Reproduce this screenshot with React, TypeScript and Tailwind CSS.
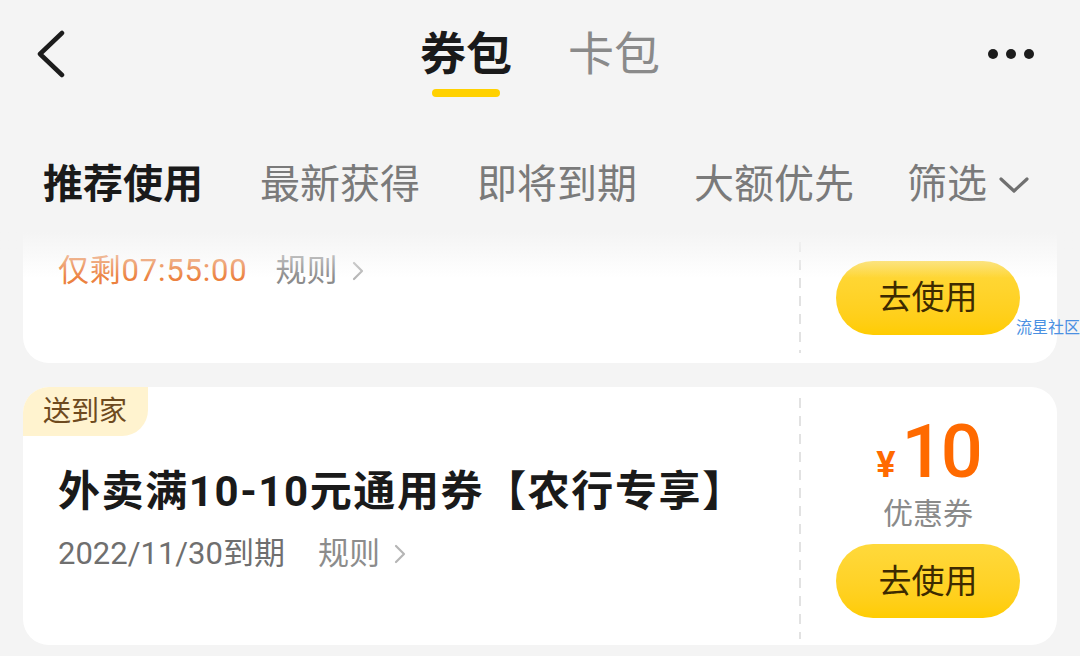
const cjk = { fontFamily: 'Roboto, "Noto Sans CJK SC", "Noto Sans", sans-serif' };

function Chevron({ className }: { className?: string }) {
  return (
    <svg width="12" height="20" viewBox="0 0 12 20" className={className}>
      <polyline points="2,2 10,10 2,18" fill="none" stroke="#b5b5b5" strokeWidth="2.2" strokeLinecap="round" strokeLinejoin="round" />
    </svg>
  );
}

function Dashes() {
  return (
    <div className="w-[2px] self-stretch bg-[repeating-linear-gradient(to_bottom,#e2e2e2_0_10px,transparent_10px_18px)]" />
  );
}

function UseButton() {
  return (
    <button className="flex h-[74px] w-[184px] items-center justify-center rounded-full bg-gradient-to-b from-[#ffd93b] to-[#ffcc00] text-[33px] leading-none text-[#3d2a00]">
      去使用
    </button>
  );
}

export default function App() {
  return (
    <div className="relative h-[656px] w-[1080px] overflow-hidden bg-[#f4f4f4]" style={cjk}>
      {/* header */}
      <div className="grid grid-cols-[1fr_auto_1fr] items-start px-[36px] pt-[31px]">
        <div className="flex h-[46px] items-center">
          <svg width="30" height="48" viewBox="0 0 30 48">
            <polyline points="26,3 4,24 26,45" fill="none" stroke="#1c1c1c" strokeWidth="4.5" strokeLinecap="round" strokeLinejoin="round" />
          </svg>
        </div>
        <div className="flex gap-[56px]">
          <div className="flex flex-col items-center">
            <span className="text-[46px] font-bold leading-[46px] text-[#1a1a1a]">券包</span>
            <span className="mt-[12px] h-[8px] w-[68px] rounded-full bg-[#ffd100]" />
          </div>
          <span className="text-[46px] leading-[46px] text-[#8a8a8a]">卡包</span>
        </div>
        <div className="flex h-[46px] items-center justify-end gap-[8px] pr-[10px]">
          <span className="h-[10px] w-[10px] rounded-full bg-[#1c1c1c]" />
          <span className="h-[10px] w-[10px] rounded-full bg-[#1c1c1c]" />
          <span className="h-[10px] w-[10px] rounded-full bg-[#1c1c1c]" />
        </div>
      </div>

      {/* sort tabs */}
      <div className="mt-[68px] flex items-center gap-[57px] pl-[43px] text-[40px] leading-[40px] text-[#7a7a7a]">
        <span className="font-bold text-[#1a1a1a]">推荐使用</span>
        <span>最新获得</span>
        <span>即将到期</span>
        <span>大额优先</span>
        <span className="-ml-[4px] flex items-center gap-[12px]">
          筛选
          <svg width="30" height="18" viewBox="0 0 30 18">
            <polyline points="2,3 15,15 28,3" fill="none" stroke="#707070" strokeWidth="3.2" strokeLinecap="round" strokeLinejoin="round" />
          </svg>
        </span>
      </div>

      {/* coupon list */}
      <div className="relative mt-[27px] flex flex-col gap-[24px] px-[23px]">
        <div className="flex h-[131px] rounded-b-[26px] bg-white">
          <div className="flex flex-1 items-start gap-[28px] pl-[35px] pt-[23px] text-[31px] leading-[31px]">
            <span className="tracking-[0.8px] text-[#ec8240]">仅剩07:55:00</span>
            <span className="flex items-center gap-[14px] text-[#8c8c8c]">
              规则
              <Chevron />
            </span>
          </div>
          <div className="flex w-[258px] py-[10px]">
            <Dashes />
            <div className="flex flex-1 items-center justify-center pr-[2px]">
              <UseButton />
            </div>
          </div>
        </div>

        <div className="flex h-[258px] rounded-[26px] bg-white">
          <div className="flex flex-1 flex-col items-start">
            <span className="flex h-[49px] items-center rounded-br-[26px] rounded-tl-[26px] bg-[#fff3cf] pl-[20px] pr-[21px] text-[28px] text-[#6e4a1e]">
              送到家
            </span>
            <span className="mt-[35px] pl-[35px] text-[42px] font-bold leading-[42px] tracking-[1.6px] text-[#1a1a1a]">
              外卖满10-10元通用券【农行专享】
            </span>
            <div className="mt-[25px] flex items-center gap-[33px] pl-[35px] text-[31px] leading-[31px]">
              <span className="text-[#6f6f6f]">2022/11/30到期</span>
              <span className="flex items-center gap-[14px] text-[#8c8c8c]">
                规则
                <Chevron />
              </span>
            </div>
          </div>
          <div className="flex w-[258px] pb-[6px] pt-[11px]">
            <Dashes />
            <div className="flex flex-1 flex-col items-center justify-center pr-[2px]">
              <div className="flex items-baseline gap-[6px] text-[#ff6a00]">
                <span className="text-[36px] font-bold leading-none">¥</span>
                <span className="text-[74px] font-medium leading-[66px] tracking-[-3px]">10</span>
              </div>
              <span className="mt-[12px] text-[30px] leading-[34px] text-[#8a8a8a]">优惠券</span>
              <div className="mt-[13px]">
                <UseButton />
              </div>
            </div>
          </div>
        </div>

        <div className="pointer-events-none absolute left-0 right-0 top-0 h-[46px] bg-gradient-to-b from-[#f4f4f4] to-[#f4f4f400]" />
      </div>

      <span className="absolute left-[1016px] top-[318px] text-[16px] leading-[20px] text-[#4a90e2]">流星社区</span>
    </div>
  );
}
